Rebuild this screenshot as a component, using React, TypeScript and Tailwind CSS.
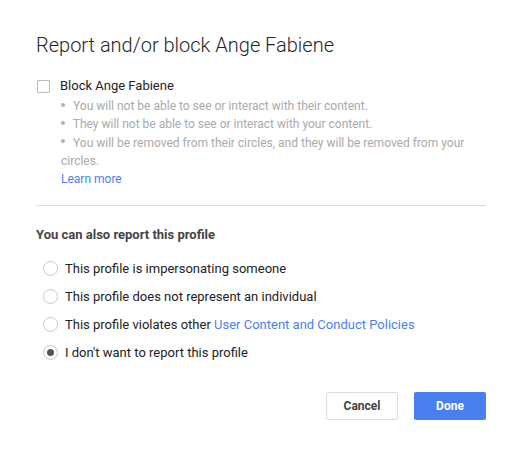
import React from "react";

function Radio({ checked }: { checked?: boolean }) {
  return (
    <span className="flex h-[15px] w-[15px] shrink-0 items-center justify-center rounded-full border border-[#c8c8c8] bg-white">
      {checked && <span className="h-[7px] w-[7px] rounded-full bg-[#555]" />}
    </span>
  );
}

export default function App() {
  const bullets = [
    "You will not be able to see or interact with their content.",
    "They will not be able to see or interact with your content.",
    "You will be removed from their circles, and they will be removed from your circles.",
  ];
  const options: React.ReactNode[] = [
    "This profile is impersonating someone",
    "This profile does not represent an individual",
    <>
      This profile violates other{" "}
      <span className="text-[#4a7ff0]">User Content and Conduct Policies</span>
    </>,
    "I don't want to report this profile",
  ];
  return (
    <div
      className="h-[452px] w-[523px] bg-white px-[36px] pt-[31px] text-[#333]"
      style={{ fontFamily: "Roboto, 'Liberation Sans', sans-serif" }}
    >
      <h1 className="text-[20px] font-light leading-[28px] text-[#262626]">
        Report and/or block Ange Fabiene
      </h1>
      <div className="mt-[18px] flex items-center gap-[10px] pl-[1px]">
        <span className="h-[13px] w-[13px] shrink-0 rounded-[1px] border border-[#bbb] bg-white" />
        <span className="text-[13px] leading-[18px] text-[#222]">Block Ange Fabiene</span>
      </div>
      <ul className="ml-[25px] mt-[2px] w-[410px] text-[12px] leading-[18.3px] text-[#aaa]">
        {bullets.map((b) => (
          <li key={b}>
            <span className="mr-[5px] inline-block h-[4px] w-[4px] translate-y-[-2px] rounded-full bg-[#b0b0b0] align-middle" />
            {" "}
            {b}
          </li>
        ))}
        <li className="text-[#4a7ff0]">Learn more</li>
      </ul>
      <div className="mt-[17px] h-px w-[450px] bg-[#ddd]" />
      <div className="mt-[20px] text-[13px] font-bold leading-[18px] text-[#444]">
        You can also report this profile
      </div>
      <div className="mt-[15px] flex flex-col gap-[10px] pl-[7px]">
        {options.map((o, i) => (
          <div key={i} className="flex h-[18px] items-center gap-[7px] text-[13px] text-[#222]">
            <Radio checked={i === 3} />
            <span>{o}</span>
          </div>
        ))}
      </div>
      <div className="mt-[31px] flex justify-end gap-[16px] pr-[1px]">
        <button className="h-[28px] w-[72px] rounded-[2px] border border-[#ddd] bg-white text-[12px] font-bold text-[#444]">
          Cancel
        </button>
        <button className="h-[28px] w-[72px] rounded-[2px] bg-[#4a7ff0] text-[12px] font-bold text-white">
          Done
        </button>
      </div>
    </div>
  );
}
